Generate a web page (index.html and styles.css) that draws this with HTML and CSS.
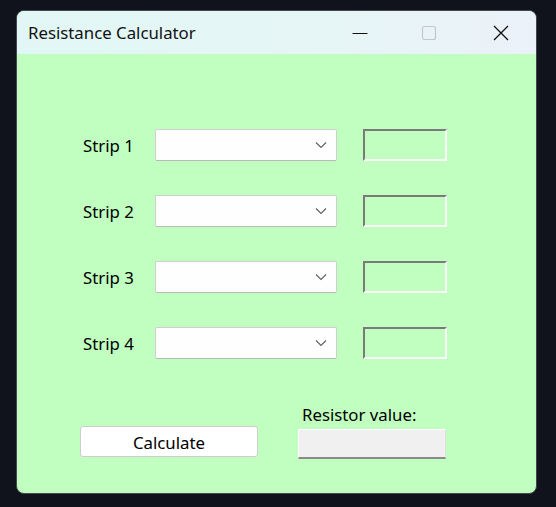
FILE: index.html
```html
<!DOCTYPE html>
<html>
<head>
<meta charset="utf-8">
<link rel="stylesheet" href="styles.css">
</head>
<body>
<div class="window">
  <div class="titlebar">
    <span class="title">Resistance Calculator</span>
    <div class="controls">
      <svg class="ctl min" width="16" height="16" viewBox="0 0 16 16"><path d="M0.5 8.5H15.5" stroke="#111" stroke-width="1.2"/></svg>
      <svg class="ctl max" width="16" height="16" viewBox="0 0 16 16"><rect x="1.5" y="1.5" width="13" height="13" rx="2" fill="none" stroke="#c4c8cc" stroke-width="1.2"/></svg>
      <svg class="ctl close" width="16" height="16" viewBox="0 0 16 16"><path d="M1 1L15 15M15 1L1 15" stroke="#111" stroke-width="1.3"/></svg>
    </div>
  </div>
  <div class="content">
    <div class="strips">
      <div class="row">
        <span class="label">Strip 1</span>
        <div class="combo"><svg width="12" height="8" viewBox="0 0 12 8"><path d="M1 1.5L6 6.5L11 1.5" fill="none" stroke="#5f5f5f" stroke-width="1.1"/></svg></div>
        <div class="box"></div>
      </div>
      <div class="row">
        <span class="label">Strip 2</span>
        <div class="combo"><svg width="12" height="8" viewBox="0 0 12 8"><path d="M1 1.5L6 6.5L11 1.5" fill="none" stroke="#5f5f5f" stroke-width="1.1"/></svg></div>
        <div class="box"></div>
      </div>
      <div class="row">
        <span class="label">Strip 3</span>
        <div class="combo"><svg width="12" height="8" viewBox="0 0 12 8"><path d="M1 1.5L6 6.5L11 1.5" fill="none" stroke="#5f5f5f" stroke-width="1.1"/></svg></div>
        <div class="box"></div>
      </div>
      <div class="row">
        <span class="label">Strip 4</span>
        <div class="combo"><svg width="12" height="8" viewBox="0 0 12 8"><path d="M1 1.5L6 6.5L11 1.5" fill="none" stroke="#5f5f5f" stroke-width="1.1"/></svg></div>
        <div class="box"></div>
      </div>
    </div>
    <div class="bottom">
      <div class="calc">Calculate</div>
      <div class="result">
        <span class="result-label">Resistor value:</span>
        <div class="output"></div>
      </div>
    </div>
  </div>
</div>
</body>
</html>
```
FILE: styles.css
```css
html, body {
  margin: 0;
  padding: 0;
  background: #10131b;
  width: 556px;
  height: 507px;
  overflow: hidden;
}
body {
  font-family: "Noto Sans", "Open Sans", sans-serif;
  color: #000;
}
.window {
  margin: 10px 0 0 16px;
  width: 519px;
  height: 482px;
  border: 1px solid #45484e;
  border-radius: 8px;
  overflow: hidden;
  display: flex;
  flex-direction: column;
  background: #c0ffc0;
}
.titlebar {
  height: 43px;
  flex: none;
  display: flex;
  align-items: center;
  background: linear-gradient(90deg, #e1f7f5 0%, #e6f5f6 60%, #ebf1f9 100%);
}
.title {
  margin-left: 11px;
  font-size: 16.8px;
  color: #111;
}
.controls {
  margin-left: auto;
  display: flex;
  align-items: center;
}
.ctl { display: block; }
.min { margin-right: 53px; }
.max { margin-right: 56px; }
.close { margin-right: 27px; }
.content {
  flex: 1;
  display: flex;
  flex-direction: column;
}
.strips {
  padding: 75px 0 0 66px;
  display: flex;
  flex-direction: column;
  gap: 34px;
}
.row {
  display: flex;
  align-items: center;
  height: 32px;
}
.label {
  width: 72px;
  font-size: 16.8px;
}
.combo {
  height: 30px;
  background: #fefefe;
  border: 1px solid #cfcfcf;
  border-bottom-color: #b8b8b8;
  border-radius: 2px;
  display: flex;
  align-items: center;
  justify-content: flex-end;
  padding-right: 9px;
  box-sizing: content-box;
  width: 171px;
}
.box {
  margin-left: 26px;
  width: 80px;
  height: 28px;
  border-style: solid;
  border-width: 2px;
  border-color: #7a7a7a #fafafa #fafafa #7a7a7a;
  background: #c0ffc0;
}
.bottom {
  margin-top: 45px;
  padding-left: 63px;
  display: flex;
  align-items: flex-start;
}
.calc {
  margin-top: 22px;
  width: 176px;
  border: 1px solid #cdcdcd;
  border-radius: 3px;
  background: #fff;
  display: flex;
  align-items: center;
  justify-content: center;
  font-size: 16.8px;
  padding-top: 1px;
  box-sizing: content-box;
  height: 28px;
}
.result {
  margin-left: 40px;
  display: flex;
  flex-direction: column;
}
.result-label {
  height: 22px;
  line-height: 22px;
  padding-left: 4px;
  font-size: 16.8px;
}
.output {
  margin-top: 3px;
  width: 146px;
  height: 27px;
  background: #f0f0f0;
  border-style: solid;
  border-width: 1px 1px 2px 1px;
  border-color: #ffffff #e0e0e0 #8a8a8a #ffffff;
}
```
